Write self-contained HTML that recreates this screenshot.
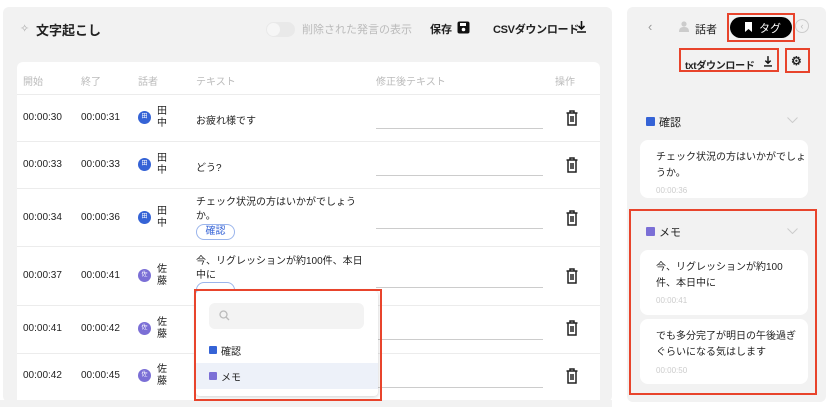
<!DOCTYPE html><html><head><meta charset="utf-8"><style>
*{box-sizing:border-box;margin:0;padding:0}
body{width:833px;height:407px;background:#fff;font-family:"Liberation Sans","Noto Sans CJK JP",sans-serif;position:relative;overflow:hidden;color:#222}
.a{position:absolute}
.lp{left:3px;top:7px;width:609px;height:395px;background:#f2f2f2;border-radius:6px}
.rp{left:627px;top:7px;width:199px;height:395px;background:#f2f2f2;border-radius:6px}
.tbl{left:17px;top:62px;width:583px;height:345px;background:#fff;border-radius:6px}
.hd{font-size:10px;color:#bbb}
.row{left:17px;width:583px;border-top:1px solid #ececec}
.t{font-size:10px;color:#222}
.av{width:13px;height:13px;border-radius:50%;font-size:6px;color:#fff;text-align:center;line-height:13px}
.nm{font-size:10px;line-height:12px;width:12px}
.ul{left:376px;width:167px;height:1px;background:#ccc}
.red{border:2px solid #e8442c}
.card{background:#fff;border-radius:8px;left:640px;width:168px}
.ct{font-size:10px;line-height:16px;left:656px;color:#222}
.ts{font-size:8px;color:#ccc}
</style></head><body>
<div class="a lp"></div>
<div class="a rp"></div>
<div class="a" style="left:20px;top:22px;font-size:11px;color:#aaa">✧</div>
<div class="a" style="left:36px;top:20px;font-size:13px;font-weight:bold">文字起こし</div>
<div class="a" style="left:266px;top:22px;width:29px;height:15px;border-radius:8px;background:#e9e9e9"></div>
<div class="a" style="left:267px;top:23px;width:13px;height:13px;border-radius:50%;background:#f6f6f6"></div>
<div class="a" style="left:302px;top:21px;font-size:11px;color:#bbb">削除された発言の表示</div>
<div class="a" style="left:430px;top:21px;font-size:11px;font-weight:bold">保存</div>
<svg class="a" style="left:457px;top:21px" width="13" height="13" viewBox="0 0 13 13"><rect x="0.5" y="0.5" width="12" height="12" rx="2" fill="#111"/><rect x="3" y="2" width="6" height="3" fill="#fff"/><circle cx="6.5" cy="8.5" r="1.8" fill="#fff"/></svg>
<div class="a" style="left:493px;top:21px;font-size:11px;font-weight:bold;letter-spacing:-0.3px">CSVダウンロード</div>
<svg class="a" style="left:577px;top:21px" width="9" height="12" viewBox="0 0 9 12"><path d="M4.5 0v8M1.5 5l3 3 3-3M0 11h9" stroke="#111" stroke-width="1.6" fill="none"/></svg>
<div class="a tbl"></div>
<div class="a hd" style="left:23px;top:73px">開始</div>
<div class="a hd" style="left:81px;top:73px">終了</div>
<div class="a hd" style="left:138px;top:73px">話者</div>
<div class="a hd" style="left:196px;top:73px">テキスト</div>
<div class="a hd" style="left:376px;top:73px">修正後テキスト</div>
<div class="a hd" style="left:555px;top:73px">操作</div>

<div class="a row" style="top:94px;height:1px"></div>
<div class="a row" style="top:141px;height:1px"></div>
<div class="a row" style="top:188px;height:1px"></div>
<div class="a row" style="top:246px;height:1px"></div>
<div class="a row" style="top:305px;height:1px"></div>
<div class="a row" style="top:353px;height:1px"></div>

<div class="a t" style="left:23px;top:112px">00:00:30</div><div class="a t" style="left:81px;top:112px">00:00:31</div>
<div class="a av" style="left:138px;top:111px;background:#3563d6">田</div><div class="a nm" style="left:157px;top:106px">田中</div>
<div class="a t" style="left:196px;top:112px">お疲れ様です</div><div class="a ul" style="top:128px"></div>

<div class="a t" style="left:23px;top:159px">00:00:33</div><div class="a t" style="left:81px;top:159px">00:00:33</div>
<div class="a av" style="left:138px;top:158px;background:#3563d6">田</div><div class="a nm" style="left:157px;top:153px">田中</div>
<div class="a t" style="left:196px;top:159px">どう?</div><div class="a ul" style="top:175px"></div>

<div class="a t" style="left:23px;top:212px">00:00:34</div><div class="a t" style="left:81px;top:212px">00:00:36</div>
<div class="a av" style="left:138px;top:211px;background:#3563d6">田</div><div class="a nm" style="left:157px;top:206px">田中</div>
<div class="a t" style="left:196px;top:196px;line-height:14px;width:170px">チェック状況の方はいかがでしょうか。</div>
<div class="a" style="left:196px;top:224px;width:39px;height:16px;border:1px solid #9bb5ec;border-radius:8px;font-size:10px;color:#3563d6;text-align:center;line-height:14px">確認</div>
<div class="a ul" style="top:228px"></div>

<div class="a t" style="left:23px;top:270px">00:00:37</div><div class="a t" style="left:81px;top:270px">00:00:41</div>
<div class="a av" style="left:138px;top:269px;background:#7b6fd6">佐</div><div class="a nm" style="left:157px;top:264px">佐藤</div>
<div class="a t" style="left:196px;top:255px;line-height:14px;width:175px">今、リグレッションが約100件、本日中に</div>
<div class="a" style="left:196px;top:282px;width:39px;height:16px;border:1px solid #9bb5ec;border-radius:8px"></div>
<div class="a ul" style="top:287px"></div>

<div class="a t" style="left:23px;top:323px">00:00:41</div><div class="a t" style="left:81px;top:323px">00:00:42</div>
<div class="a av" style="left:138px;top:322px;background:#7b6fd6">佐</div><div class="a nm" style="left:157px;top:317px">佐藤</div>
<div class="a ul" style="top:339px"></div>

<div class="a t" style="left:23px;top:370px">00:00:42</div><div class="a t" style="left:81px;top:370px">00:00:45</div>
<div class="a av" style="left:138px;top:369px;background:#7b6fd6">佐</div><div class="a nm" style="left:157px;top:364px">佐藤</div>
<div class="a ul" style="top:387px"></div>

<svg class="a" style="left:566px;top:110px" width="12" height="16" viewBox="0 0 12 16"><g fill="none" stroke="#222" stroke-width="1.5"><path d="M0.5 3h11M4 3V1h4v2M2 3v12h8V3M5 6v6M7 6v6"/></g></svg>
<svg class="a" style="left:566px;top:157px" width="12" height="16" viewBox="0 0 12 16"><g fill="none" stroke="#222" stroke-width="1.5"><path d="M0.5 3h11M4 3V1h4v2M2 3v12h8V3M5 6v6M7 6v6"/></g></svg>
<svg class="a" style="left:566px;top:210px" width="12" height="16" viewBox="0 0 12 16"><g fill="none" stroke="#222" stroke-width="1.5"><path d="M0.5 3h11M4 3V1h4v2M2 3v12h8V3M5 6v6M7 6v6"/></g></svg>
<svg class="a" style="left:566px;top:268px" width="12" height="16" viewBox="0 0 12 16"><g fill="none" stroke="#222" stroke-width="1.5"><path d="M0.5 3h11M4 3V1h4v2M2 3v12h8V3M5 6v6M7 6v6"/></g></svg>
<svg class="a" style="left:566px;top:320px" width="12" height="16" viewBox="0 0 12 16"><g fill="none" stroke="#222" stroke-width="1.5"><path d="M0.5 3h11M4 3V1h4v2M2 3v12h8V3M5 6v6M7 6v6"/></g></svg>
<svg class="a" style="left:566px;top:368px" width="12" height="16" viewBox="0 0 12 16"><g fill="none" stroke="#222" stroke-width="1.5"><path d="M0.5 3h11M4 3V1h4v2M2 3v12h8V3M5 6v6M7 6v6"/></g></svg>

<div class="a" style="left:0;top:400px;width:612px;height:7px;background:#f2f2f2"></div>

<div class="a" style="left:196px;top:291px;width:182px;height:105px;background:#fff;border-radius:4px;box-shadow:0 1px 4px rgba(0,0,0,.2)"></div>
<div class="a" style="left:209px;top:303px;width:155px;height:26px;background:#f3f3f3;border-radius:6px"></div>
<svg class="a" style="left:219px;top:310px" width="11" height="11" viewBox="0 0 11 11"><circle cx="4.5" cy="4.5" r="3.5" fill="none" stroke="#bbb" stroke-width="1.3"/><path d="M7 7l3 3" stroke="#bbb" stroke-width="1.3"/></svg>
<div class="a" style="left:209px;top:346px;width:8px;height:8px;background:#3563d6;border-radius:1px"></div>
<div class="a" style="left:221px;top:343px;font-size:10px">確認</div>
<div class="a" style="left:196px;top:363px;width:182px;height:26px;background:#edf1f9"></div>
<div class="a" style="left:209px;top:372px;width:8px;height:8px;background:#7b6fd6;border-radius:1px"></div>
<div class="a" style="left:221px;top:369px;font-size:10px">メモ</div>
<div class="a red" style="left:194px;top:289px;width:188px;height:112px"></div>

<div class="a" style="left:648px;top:19px;font-size:13px;color:#999">‹</div>
<svg class="a" style="left:679px;top:21px" width="10" height="11" viewBox="0 0 10 11"><circle cx="5" cy="3" r="2.6" fill="#ccc"/><path d="M0 11c0-4 2-5 5-5s5 1 5 5z" fill="#ccc"/></svg>
<div class="a" style="left:695px;top:21px;font-size:11px">話者</div>
<div class="a" style="left:730px;top:17px;width:62px;height:21px;background:#000;border-radius:11px"></div>
<svg class="a" style="left:745px;top:22px" width="7" height="10" viewBox="0 0 7 10"><path d="M0 0h7v10L3.5 7 0 10z" fill="#fff"/></svg>
<div class="a" style="left:759px;top:20px;font-size:11px;color:#fff">タグ</div>
<div class="a red" style="left:727px;top:13px;width:68px;height:29px"></div>
<div class="a" style="left:795px;top:19px;width:14px;height:14px;border:1px solid #ccc;border-radius:50%;font-size:9px;color:#bbb;text-align:center;line-height:12px">‹</div>
<div class="a" style="left:685px;top:57px;font-size:10px;font-weight:bold;letter-spacing:-0.3px">txtダウンロード</div>
<svg class="a" style="left:764px;top:56px" width="8" height="11" viewBox="0 0 9 12"><path d="M4.5 0v8M1.5 5l3 3 3-3M0 11h9" stroke="#111" stroke-width="1.6" fill="none"/></svg>
<div class="a red" style="left:679px;top:48px;width:100px;height:24px"></div>
<div class="a" style="left:791px;top:54px;font-size:12px;font-weight:bold">⚙</div>
<div class="a red" style="left:785px;top:48px;width:25px;height:25px"></div>

<div class="a" style="left:646px;top:117px;width:9px;height:9px;background:#3563d6;border-radius:1px"></div>
<div class="a" style="left:659px;top:114px;font-size:11px">確認</div>
<svg class="a" style="left:787px;top:117px" width="11" height="6" viewBox="0 0 11 6"><path d="M0.5 0.5l5 5 5-5" stroke="#ccc" fill="none"/></svg>
<div class="a card" style="top:140px;height:58px"></div>
<div class="a ct" style="top:150px;width:150px">チェック状況の方はいかがでしょうか。</div>
<div class="a ts" style="left:656px;top:186px">00:00:36</div>

<div class="a" style="left:646px;top:227px;width:9px;height:9px;background:#7b6fd6;border-radius:1px"></div>
<div class="a" style="left:659px;top:224px;font-size:11px">メモ</div>
<svg class="a" style="left:787px;top:228px" width="11" height="6" viewBox="0 0 11 6"><path d="M0.5 0.5l5 5 5-5" stroke="#ccc" fill="none"/></svg>
<div class="a card" style="top:250px;height:65px"></div>
<div class="a ct" style="top:260px;width:130px">今、リグレッションが約100件、本日中に</div>
<div class="a ts" style="left:656px;top:296px">00:00:41</div>
<div class="a card" style="top:319px;height:65px"></div>
<div class="a ct" style="top:329px;width:150px">でも多分完了が明日の午後過ぎぐらいになる気はします</div>
<div class="a ts" style="left:656px;top:366px">00:00:50</div>
<div class="a red" style="left:629px;top:209px;width:188px;height:186px"></div>
</body></html>
